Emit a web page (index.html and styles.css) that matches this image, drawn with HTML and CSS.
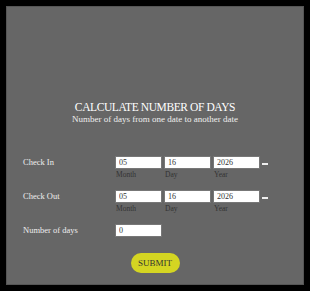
FILE: index.html
```html
<!DOCTYPE html>
<html lang="en">
<head>
  <meta charset="UTF-8" />
  <title>Calculate Number of Days</title>
  <link rel="stylesheet" href="styles.css">
</head>
<body>
  <div class="panel">
    <div class="header">
      <h1>CALCULATE NUMBER OF DAYS</h1>
      <p class="sub">Number of days from one date to another date</p>
    </div>

    <div class="row">
      <span class="label">Check In</span>
      <div class="field"><input type="text" value="05" /><span>Month</span></div>
      <div class="field"><input type="text" value="16" /><span>Day</span></div>
      <div class="field"><input type="text" value="2026" /><span>Year</span></div>
      <span class="dash"></span>
    </div>

    <div class="row">
      <span class="label">Check Out</span>
      <div class="field"><input type="text" value="05" /><span>Month</span></div>
      <div class="field"><input type="text" value="16" /><span>Day</span></div>
      <div class="field"><input type="text" value="2026" /><span>Year</span></div>
      <span class="dash"></span>
    </div>

    <div class="row">
      <span class="label">Number of days</span>
      <div class="field"><input type="text" value="0" /></div>
    </div>

    <div class="actions">
      <button>SUBMIT</button>
    </div>
  </div>
</body>
</html>
```

FILE: styles.css
```css
* { box-sizing: border-box; }
body {
  margin: 0;
  background-color: #000;
  font-family: 'Liberation Serif', serif;
}

.panel {
  margin: 6px;
  width: 298px;
  height: 279px;
  background-color: #666;
  border: 1px solid #555;
  padding-top: 93px;
}

.header {
  text-align: center;
  color: #fff;
}

.header h1 {
  margin: 0;
  font-size: 11.5px;
  font-weight: normal;
  letter-spacing: -0.4px;
  line-height: 14px;
}

.sub {
  margin: 0;
  font-size: 9px;
  line-height: 11px;
  color: #eee;
}

.row {
  display: flex;
  align-items: flex-start;
  height: 34px;
  padding-left: 16px;
}

.header + .row { margin-top: 31px; }

.label {
  width: 92px;
  color: #eee;
  font-size: 8.5px;
  line-height: 13px;
}

.field {
  display: flex;
  flex-direction: column;
  width: 47px;
  margin-right: 2px;
}

.field input {
  width: 100%;
  height: 13px;
  padding: 0 3px;
  border: 1px solid #777;
  background: #fff;
  color: #333;
  font-family: 'Liberation Serif', serif;
  font-size: 8px;
}

.field span {
  font-size: 7.5px;
  color: #333;
  line-height: 11px;
  padding-left: 1px;
}

.dash {
  width: 6px;
  height: 2px;
  background: #eee;
  margin-top: 7px;
}

.actions {
  text-align: center;
  margin-top: -6px;
}

button {
  width: 49px;
  height: 20px;
  padding: 0;
  border: none;
  border-radius: 10px;
  background-color: #d4d522;
  color: #333;
  font-family: 'Liberation Serif', serif;
  font-size: 9px;
}
```
